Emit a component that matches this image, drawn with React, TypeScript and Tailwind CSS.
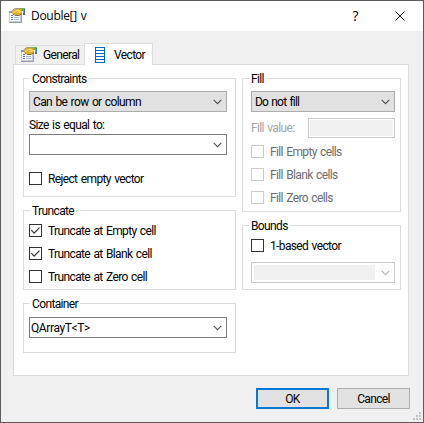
import type { ReactNode } from 'react';

const PropertiesIcon = () => (
  <svg width="17" height="16" viewBox="0 0 17 16" className="shrink-0">
    <path d="M0 4h13v11H0z" fill="#97a0ab" />
    <path d="M.5 4.500h11v9H.5z" fill="#fbfcff" stroke="#c3ccd8" />
    <path d="M0 3h5v2H0z" fill="#6d9fd0" />
    <path d="M2 7.500h2M2 9.500h2M2 11.500h2" stroke="#5377b4" />
    <path d="M5 9.500h5M5 11.500h5" stroke="#a6b9de" />
    <path d="M3 3l3-2h7v5l-3 1H6L3 6z" fill="#e0ac2c" />
    <path d="M4 6.500h1l1 1h4l3-2" stroke="#806d3e" fill="none" />
    <path d="M4 4.500l4-2h3L8 5M10 5l3-2" stroke="#ffe477" fill="none" />
    <path d="M3 2.500L6 .5h6" stroke="#94835a" strokeWidth=".8" fill="none" />
    <path d="M12 0h4v6h-2V3h-2z" fill="#6eb45a" />
    <path d="M15 1h1v6h-2V5h1z" fill="#48737e" />
  </svg>
);

const VectorIcon = () => (
  <svg width="10" height="16" viewBox="0 0 10 16" shapeRendering="crispEdges" className="shrink-0">
    <rect x=".5" y=".5" width="9" height="15" fill="#fff" stroke="#0066cc" />
    <path d="M1 3.5h8M1 6.5h8M1 9.5h8M1 12.5h8" stroke="#0066cc" />
  </svg>
);

const Group = ({ title, className, children }: { title: string; className: string; children: ReactNode }) => (
  <section className={`relative flex flex-col border border-[#dcdcdc] ${className}`}>
    <h2 className="absolute -top-[8px] left-[6px] h-4 bg-white px-[2px] leading-4">{title}</h2>
    {children}
  </section>
);

const Combo = ({ value = '', kind, className = '' }: { value?: string; kind: 'list' | 'edit' | 'disabled'; className?: string }) => {
  const tone = kind === 'list' ? 'border-[#adadad] bg-[#e1e1e1] pl-[3px]' : kind === 'edit' ? 'border-[#7a7a7a] bg-white pl-[1px]' : 'border-[#cccccc] bg-white pl-[2px]';
  return (
    <div className={`flex h-[21px] shrink-0 items-center justify-between border pr-1 ${tone} ${className}`}>
      {kind === 'disabled' ? <span className="h-[15px] w-[121px] bg-[#f0f0f0]" /> : <span className="leading-4">{value}</span>}
      <svg width="9" height="6" viewBox="0 0 9 6" fill="none" className="shrink-0">
        <path d="M.7.9l3.8 3.8L8.3.9" stroke={kind === 'disabled' ? '#b5b5b5' : '#505050'} strokeWidth="1.1" />
      </svg>
    </div>
  );
};

const Check = ({ label, checked = false, disabled = false }: { label: string; checked?: boolean; disabled?: boolean }) => (
  <div className={`flex h-[13px] shrink-0 items-center gap-[6px] ${disabled ? 'text-[#6d6d6d]' : ''}`}>
    <span className={`flex size-[13px] items-center justify-center border ${disabled ? 'border-[#cccccc]' : 'border-[#333333]'}`}>
      {checked && <svg width="11" height="11" viewBox="0 0 11 11" fill="none"><path d="M1.3 5.2l2.800 2.900 5.400-5.500" stroke="#333" strokeWidth="1.2" /></svg>}
    </span>
    <span className="leading-4">{label}</span>
  </div>
);

export default function App() {
  return (
    <main className="flex h-[423px] w-[424px] flex-col overflow-hidden border border-[#5b5a5d] bg-[#f0f0f0] font-['Roboto',sans-serif] text-[12px] leading-4 tracking-[-0.63px] whitespace-nowrap text-black [word-spacing:1px]">
      <header className="flex h-[30px] shrink-0 items-center bg-white pl-2">
        <PropertiesIcon />
        <h1 className="ml-[5px] font-['Open_Sans',sans-serif] text-[12px] tracking-[-0.3px]">Double[] v</h1>
        <span className="mr-[37px] ml-auto font-['Open_Sans',sans-serif] text-[14px]">?</span>
        <svg width="10" height="10" viewBox="0 0 10 10" className="mr-[18px]"><path d="M.4.4l9.2 9.2M9.6.4L.4 9.6" stroke="#111" /></svg>
      </header>
      <nav className="z-10 -mb-px flex h-[34px] shrink-0 items-end pl-[14px]">
        <div className="mb-px flex h-[19px] w-[69px] items-center gap-[5px] border border-r-0 border-b-0 border-[#dcdcdc] pl-[5px]"><PropertiesIcon />General</div>
        <div className="flex h-[22px] w-[69px] items-center gap-[9px] border border-b-0 border-[#dcdcdc] bg-white pl-[10px]"><VectorIcon />Vector</div>
      </nav>
      <div className="ml-3 flex h-[312px] w-[396px] shrink-0 gap-[6px] border border-[#dcdcdc] bg-white pt-[13px] pl-[9px]">
        <div className="flex w-[213px] flex-col">
          <Group title="Constraints" className="h-[119px] px-[5px] pt-3">
            <Combo value="Can be row or column" kind="list" className="w-[198px]" />
            <span className="mt-[5px] mb-[1px]">Size is equal to:</span>
            <Combo kind="edit" className="mb-[17px] w-[198px]" />
            <Check label="Reject empty vector" />
          </Group>
          <Group title="Truncate" className="mt-[13px] h-[80px] gap-[10px] px-[5px] pt-[13px]">
            <Check label="Truncate at Empty cell" checked />
            <Check label="Truncate at Blank cell" checked />
            <Check label="Truncate at Zero cell" />
          </Group>
          <Group title="Container" className="mt-[13px] h-[50px] px-[5px] pt-[13px]">
            <Combo value="QArrayT<T>" kind="edit" className="w-[198px] tracking-[-0.4px]" />
          </Group>
        </div>
        <div className="flex w-[159px] flex-col">
          <Group title="Fill" className="h-[134px] px-2 pt-3">
            <Combo value="Do not fill" kind="list" className="w-[144px] tracking-[-0.8px]" />
            <div className="mt-[6px] mb-[7px] flex h-5 w-[144px] shrink-0 items-center justify-between text-[#a5a5a5]">
              Fill value:
              <span className="h-5 w-[87px] border border-[#cccccc] bg-white p-px"><span className="block h-full bg-[#f0f0f0]" /></span>
            </div>
            <div className="flex flex-col gap-[10px]">
              <Check label="Fill Empty cells" disabled />
              <Check label="Fill Blank cells" disabled />
              <Check label="Fill Zero cells" disabled />
            </div>
          </Group>
          <Group title="Bounds" className="mt-[13px] h-[65px] px-2 pt-[13px]">
            <Check label="1-based vector" />
            <Combo kind="disabled" className="mt-[10px] w-[144px]" />
          </Group>
        </div>
      </div>
      <footer className="mt-3 flex justify-end gap-2 pr-[13px]">
        <button className="h-[21px] w-[73px] border-2 border-[#0078d7] bg-[#e1e1e1] leading-4">OK</button>
        <button className="h-[21px] w-[73px] border border-[#adadad] bg-[#e1e1e1] leading-4">Cancel</button>
      </footer>
      <svg width="8" height="8" viewBox="0 0 8 8" className="mt-[3px] mr-[2px] self-end" fill="#bfbfbf"><path d="M6 0h2v2H6zM3 3h2v2H3zM6 3h2v2H6zM0 6h2v2H0zM3 6h2v2H3zM6 6h2v2H6z" /></svg>
    </main>
  );
}
